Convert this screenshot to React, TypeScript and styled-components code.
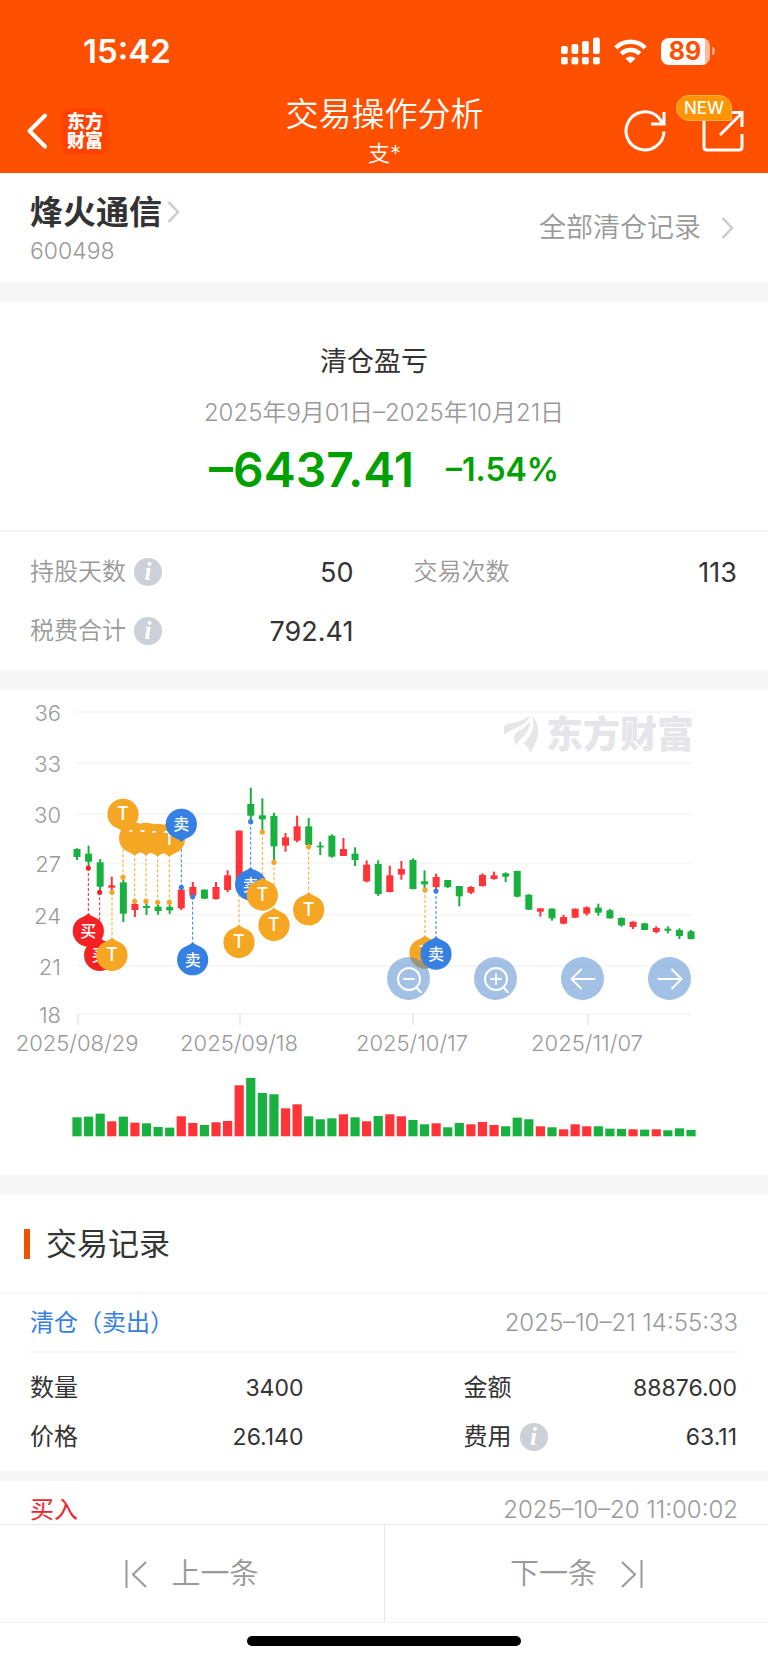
import React from "react";
import styled, { createGlobalStyle } from "styled-components";

const SANS = 'Inter, "Noto Sans CJK SC", sans-serif';

const GlobalStyle = createGlobalStyle`
  *, *::before, *::after { box-sizing: border-box; }
  body {
    margin: 0;
    background: #fff;
    color: #333;
    font-family: ${SANS};
    font-size: 23px;
    line-height: 1;
  }
  button {
    margin: 0;
    padding: 0;
    border: 0;
    background: none;
    color: inherit;
    font: inherit;
    cursor: pointer;
  }
  a { color: inherit; text-decoration: none; }
  h1, h2, p, dl, dt, dd { margin: 0; font-weight: inherit; font-size: inherit; }
  svg { display: block; }
`;

const Screen = styled.div`
  display: flex;
  flex-direction: column;
  height: 100vh;
`;

/* ---------- header ---------- */

const Header = styled.header`
  flex: none;
  background: #ff5000;
  color: #fff;
`;

const StatusBar = styled.div`
  display: flex;
  align-items: center;
  justify-content: space-between;
  height: 88px;
  padding: 14px 53px 0 83px;
`;

const Clock = styled.time`
  font-size: 33px;
  font-weight: 600;
`;

const StatusIcons = styled.div`
  display: flex;
  align-items: center;
  gap: 14px;
`;

const Battery = styled.div`
  display: flex;
  align-items: center;
  gap: 2px;
`;

const BatteryBody = styled.span`
  width: 49px;
  height: 27px;
  padding-right: 1px;
  border-radius: 8px;
  background: linear-gradient(90deg, #fff 44px, #ffb999 44px);
  color: #ff5000;
  font-size: 25px;
  font-weight: 700;
  line-height: 27px;
  text-align: center;
`;

const BatteryNub = styled.span`
  width: 3px;
  height: 8px;
  border-radius: 0 3px 3px 0;
  background: #ffa680;
`;

const NavBar = styled.div`
  display: grid;
  grid-template-columns: 1fr auto 1fr;
  align-items: center;
  height: 85px;
  padding: 0 24px 0 25px;
`;

const NavGroup = styled.div<{ $end?: boolean }>`
  display: flex;
  align-items: center;
  justify-content: ${(p) => (p.$end ? "flex-end" : "flex-start")};
  gap: ${(p) => (p.$end ? "36px" : "15px")};
`;

const AppMark = styled.a`
  display: flex;
  flex-direction: column;
  align-items: center;
  justify-content: center;
  width: 46px;
  height: 46px;
  border-radius: 9px;
  background: #ff4200;
  font-size: 18px;
  font-weight: 900;
  line-height: 19px;
`;

const NavTitle = styled.div`
  display: flex;
  flex-direction: column;
  align-items: center;
  gap: 5px;
`;

const PageTitle = styled.h1`
  font-size: 33px;
  font-weight: 350;
  line-height: 40px;
`;

const PageSubtitle = styled.p`
  font-size: 22px;
  font-weight: 350;
  line-height: 28px;
`;

const ShareButton = styled.button`
  position: relative;
`;

const NewBadge = styled.span`
  position: absolute;
  left: -26px;
  top: -15px;
  width: 56px;
  height: 26px;
  border: 1px solid #ffb04d;
  border-radius: 13px 13px 2px 13px;
  background: #ff9500;
  font-size: 17px;
  font-weight: 500;
  line-height: 25px;
  text-align: center;
`;

/* ---------- body ---------- */

const Content = styled.main`
  flex: 1;
  min-height: 0;
  overflow-y: auto;
  scrollbar-width: none;
`;

const Gap = styled.div<{ $thin?: boolean }>`
  height: ${(p) => (p.$thin ? "10px" : "20px")};
  background: #f7f7f7;
`;

const StockBar = styled.section`
  display: flex;
  align-items: center;
  justify-content: space-between;
  height: 109px;
  padding: 0 34px 0 30px;
`;

const Stock = styled.a`
  display: flex;
  flex-direction: column;
  gap: 8px;
  color: #999;
  font-weight: 350;
`;

const StockName = styled.span`
  display: flex;
  align-items: center;
  gap: 5px;
  color: #333;
  font-size: 33px;
  font-weight: 700;
  line-height: 40px;
`;

const AllRecords = styled.a`
  display: flex;
  align-items: center;
  gap: 20px;
  color: #999;
  font-size: 27px;
  font-weight: 350;
`;

const Profit = styled.section`
  display: flex;
  flex-direction: column;
  align-items: center;
  height: 230px;
  padding-top: 44px;
  border-bottom: 2px solid #f5f5f5;
`;

const ProfitTitle = styled.h2`
  padding-right: 20px;
  font-size: 27px;
  line-height: 32px;
`;

const Period = styled.p`
  margin-top: 20px;
  color: #999;
  font-size: 24px;
  font-weight: 350;
  line-height: 30px;
`;

const Amounts = styled.p`
  display: flex;
  align-items: center;
  gap: 32px;
  margin-top: 12px;
  color: #00a000;
  line-height: 60px;
`;

const Amount = styled.strong`
  font-size: 48px;
  font-weight: 600;
`;

const Percent = styled.span`
  font-size: 32px;
  font-weight: 600;
`;

const Stats = styled.dl`
  display: grid;
  grid-template-columns: 1fr 1fr;
  column-gap: 60px;
  row-gap: 19px;
  padding: 20px 31px 19px 30px;
`;

const Details = styled(Stats)`
  column-gap: 160px;
  row-gap: 9px;
  padding: 15px 31px 14px 30px;
`;

const Pair = styled.div<{ $dark?: boolean }>`
  display: flex;
  align-items: center;
  justify-content: space-between;
  height: 40px;

  dt {
    display: flex;
    align-items: center;
    gap: 8px;
    color: ${(p) => (p.$dark ? "#333" : "#999")};
    font-size: 24px;
    font-weight: ${(p) => (p.$dark ? 400 : 350)};
  }
  dd { font-size: ${(p) => (p.$dark ? "23px" : "27px")}; }
`;

const InfoButton = styled.button`
  width: 28px;
  height: 28px;
  border-radius: 50%;
  background: #ccd0d7;
  color: #fff;
  font: italic 700 25px/26px "Liberation Serif", serif;
  text-align: center;
`;

/* ---------- chart ---------- */

const ChartPanel = styled.section`
  position: relative;
  svg text { font-family: ${SANS}; }
`;

const ChartSvg = styled.svg`
  width: 100%;
  height: auto;
`;

const ChartControls = styled.div`
  position: absolute;
  right: 10%;
  bottom: 36%;
  display: flex;
  gap: 44px;
`;

const RoundButton = styled.button`
  display: flex;
  align-items: center;
  justify-content: center;
  width: 43px;
  height: 43px;
  border-radius: 50%;
  background: rgba(71, 131, 201, 0.5);
`;

/* ---------- records ---------- */

const RecordsTitle = styled.h2`
  display: flex;
  align-items: center;
  gap: 16px;
  height: 99px;
  padding-left: 24px;
  border-bottom: 2px solid #f7f7f7;
  font-size: 31px;

  &::before {
    content: "";
    width: 6px;
    height: 30px;
    background: #ea5504;
  }
`;

const RecordHead = styled.div`
  display: flex;
  align-items: center;
  justify-content: space-between;
  height: 59px;
  margin: 0 30px;
  border-bottom: 2px solid #f7f7f7;
`;

const Action = styled.span<{ $buy?: boolean }>`
  color: ${(p) => (p.$buy ? "#f5222d" : "#3580e2")};
  font-size: 24px;
`;

const Stamp = styled.time`
  color: #999;
  font-size: 24px;
  font-weight: 350;
`;

/* ---------- footer ---------- */

const Footer = styled.footer`
  flex: none;
  background: #fff;
`;

const Pager = styled.nav`
  display: grid;
  grid-template-columns: 1fr 1fr;
  height: 99px;
  border-top: 1px solid #e6e6e6;
  border-bottom: 1px solid #f2f2f2;
`;

const PagerButton = styled.button`
  display: flex;
  align-items: center;
  justify-content: center;
  gap: 24px;
  color: #999;
  font-size: 29px;
  font-weight: 350;

  & + & { border-left: 1px solid #e6e6e6; }
`;

const HomeArea = styled.div`
  display: flex;
  justify-content: center;
  height: 40px;
  padding-top: 13px;
`;

const HomeBar = styled.span`
  width: 274px;
  height: 10px;
  border-radius: 5px;
  background: #000;
`;

/* ---------- chart data ---------- */

// Vertical values are in thirds of a chart unit, measured from the top.
const u = (n: number) => n / 3;
const cx = (i: number) => 77 + i * 11.585;

const RED = "#ff3338";
const GREEN = "#18b03f";

// [direction, high, body top, body bottom, low, volume]
type Candle = [string, number, number, number, number, number];
const CANDLES: Candle[] = [
  ["g", 475, 477, 501, 510, 57], ["g", 467, 491, 515, 528, 59], ["g", 507, 517, 590, 600, 68],
  ["r", 560, 586, 593, 600, 45], ["g", 568, 577, 671, 696, 59], ["r", 636, 642, 660, 681, 41],
  ["g", 640, 648, 654, 675, 39], ["g", 643, 650, 663, 674, 28], ["g", 645, 651, 661, 672, 26],
  ["r", 597, 599, 655, 660, 60], ["r", 576, 591, 617, 622, 40], ["g", 598, 599, 626, 627, 34],
  ["r", 576, 591, 627, 629, 42], ["r", 541, 556, 600, 607, 46], ["r", 422, 422, 575, 575, 153],
  ["g", 293, 342, 377, 390, 175], ["g", 325, 376, 388, 420, 130], ["g", 368, 378, 469, 512, 126],
  ["r", 429, 442, 467, 485, 84], ["r", 377, 409, 452, 457, 96], ["g", 384, 409, 465, 468, 60],
  ["g", 455, 467, 472, 495, 51], ["g", 433, 437, 500, 503, 54], ["r", 444, 477, 498, 498, 66],
  ["g", 472, 491, 510, 528, 57], ["r", 511, 524, 574, 577, 45], ["g", 511, 522, 612, 618, 61],
  ["r", 527, 556, 606, 607, 66], ["r", 513, 537, 554, 569, 60], ["g", 505, 510, 597, 598, 49],
  ["g", 541, 574, 583, 594, 36], ["r", 551, 561, 591, 598, 39], ["g", 570, 570, 591, 594, 27],
  ["g", 588, 588, 619, 649, 40], ["r", 588, 591, 608, 612, 36], ["r", 550, 555, 588, 590, 43],
  ["r", 545, 556, 567, 569, 34], ["g", 547, 550, 560, 576, 30], ["g", 542, 543, 620, 622, 56],
  ["g", 613, 614, 659, 660, 51], ["r", 655, 655, 665, 680, 30], ["g", 655, 656, 685, 692, 27],
  ["r", 675, 681, 701, 703, 21], ["r", 656, 656, 683, 684, 36], ["r", 649, 652, 671, 677, 30],
  ["g", 641, 653, 668, 677, 30], ["g", 657, 661, 685, 686, 23], ["g", 682, 684, 706, 710, 22],
  ["r", 694, 695, 711, 717, 21], ["g", 699, 700, 720, 720, 20], ["r", 709, 714, 726, 730, 21],
  ["g", 709, 716, 722, 730, 18], ["g", 715, 720, 738, 747, 24], ["g", 720, 724, 747, 748, 19],
];

const PRICE_LINES: [string, number][] = [
  ["36", 66], ["33", 218], ["30", 372], ["27", 520], ["24", 674], ["21", 827], ["18", 973],
];

const DATE_TICKS: [string, number][] = [
  ["2025/08/29", 77], ["2025/09/18", 239], ["2025/10/17", 412], ["2025/11/07", 587],
];

const PIN_COLORS: Record<string, string> = { T: "#f5a623", 卖: "#3580e2", 买: "#f52225" };

// [label, candle x, marked price, true when the pin stands above the price]
type PinData = [string, number, number, boolean?];
const PINS: PinData[] = [
  ["买", 265, 534], ["买", 299, 607], ["T", 336, 607], ["T", 369, 562, true],
  ["T", 404, 634, true], ["T", 438, 634, true], ["T", 473, 637, true], ["T", 508, 637, true],
  ["卖", 544, 592, true], ["卖", 578, 620], ["T", 717, 568], ["卖", 752, 395], ["T", 787, 426],
  ["T", 822, 517], ["T", 926, 470], ["T", 1275, 600], ["卖", 1308, 603],
];

const Pin = ({ data: [label, px, price, above] }: { data: PinData }) => {
  const x = u(px);
  const dir = above ? -1 : 1;
  const tip = u(price) + dir * 45.5;
  const c = tip + dir * 17.5;
  return (
    <g>
      <path
        d="M0-17.5C3-14.5 8-13.5 11.5-10.5A15.6 15.6 0 1 1-11.5-10.5C-8-13.5-3-14.5 0-17.5Z"
        transform={`translate(${x} ${c}) scale(1 ${dir})`}
        fill={PIN_COLORS[label]}
      />
      <text x={x} y={c + 6} fontSize={label === "T" ? 18 : 16} fontWeight={500} fill="#fff" textAnchor="middle">
        {label}
      </text>
    </g>
  );
};

const PinStem = ({ data: [label, px, price, above] }: { data: PinData }) => (
  <g stroke={PIN_COLORS[label]} fill={PIN_COLORS[label]}>
    <line
      x1={u(px)} x2={u(px)} y1={u(price)} y2={u(price) + (above ? -46 : 46)}
      strokeWidth="1" strokeDasharray="3 2"
    />
    <circle cx={u(px)} cy={u(price)} r="2.6" stroke="none" />
  </g>
);

const Chart = () => (
  <ChartSvg viewBox="0 0 768 485" role="img" aria-label="烽火通信 K线图">
    {PRICE_LINES.map(([label, y]) => (
      <g key={label}>
        <line x1="77" x2="691" y1={u(y)} y2={u(y)} stroke="#f6f6f7" strokeWidth="2" />
        <text x="61" y={u(y) + 9} fontSize="22" fontWeight="350" fill="#999" textAnchor="end">{label}</text>
      </g>
    ))}
    {DATE_TICKS.map(([label, x]) => (
      <g key={label}>
        <line x1={x + 1} x2={x + 1} y1="324" y2="335" stroke="#ededed" strokeWidth="2" />
        <text x={x} y="361" fontSize="22" fontWeight="350" fill="#999" textAnchor="middle">{label}</text>
      </g>
    ))}
    <g fill="#e6e5ea">
      <path d="M504 40C504 35 506 34 512 33C521 31 526 29 529 26C528 35 515 37 504 44.5Z" />
      <path d="M530 25C531 32 527 37 517 42C514 44 515 51 516 55C518 46 530 41 530 25Z" />
      <path d="M504 36C512 33 522 33 529 26C526 36 511 36 504 45Z" />
      <path d="M530 25C533 38 519 39 513.5 47L516 55.5C520 47 533 43 530 25Z" />
      <path d="M532 26C540 34 541 46 530.5 62.5C529 58 526 56 523.5 53C531 46 536 37 532 26Z" />
      <text x="546" y="58" fontSize="37" fontWeight="900">东方财富</text>
    </g>
    {CANDLES.map(([dir, high, top, bottom, low, vol], i) => (
      <g key={i} fill={dir === "r" ? RED : GREEN}>
        <rect x={cx(i) - 1} y={u(high)} width="2" height={u(low - high)} />
        <rect x={cx(i) - 3.5} y={u(top)} width="7" height={u(bottom - top)} />
        <rect x={cx(i) - 4.6} y={446.3 - u(vol)} width="9.2" height={u(vol)} />
      </g>
    ))}
    {PINS.map((p, i) => <PinStem key={i} data={p} />)}
    {PINS.map((p, i) => <Pin key={i} data={p} />)}
  </ChartSvg>
);

/* ---------- icons ---------- */

const Chevron = () => (
  <svg width="13" height="22" viewBox="0 0 13 22" fill="none" stroke="#ccc" strokeWidth="2.5">
    <path d="M1.5 1L11 11L1.5 21" />
  </svg>
);

const ControlIcon = ({ children }: { children: React.ReactNode }) => (
  <svg width="28" height="28" viewBox="0 0 28 28" fill="none" stroke="#fff" strokeWidth="2" strokeLinecap="round" strokeLinejoin="round">
    {children}
  </svg>
);

const Lens = () => <><circle cx="14" cy="14" r="11" /><path d="M21.5 22.5L26 27.5M9 14H19" /></>;

const SignalIcon = () => (
  <svg width="39" height="28" viewBox="0 0 39 28" fill="#fff">
    {[[0, 9], [10.5, 7], [21, 4], [32, 0.5]].map(([x, y]) => (
      <React.Fragment key={x}>
        <rect x={x} y={y} width="6.8" height={17 - y} rx="2" />
        <rect x={x} y="20" width="6.8" height="7.5" rx="2" />
      </React.Fragment>
    ))}
  </svg>
);

const WifiIcon = () => (
  <svg width="33" height="25" viewBox="0 0 33 25" fill="none" stroke="#fff" strokeWidth="4.5">
    <path d="M1.8 8.8A21 21 0 0 1 31.2 8.8" />
    <path d="M7.3 14.8A13 13 0 0 1 25.7 14.8" />
    <path d="M16.5 24.5L11.5 19.5A7.2 7.2 0 0 1 21.5 19.5Z" fill="#fff" stroke="none" />
  </svg>
);

const EdgeArrow = ({ next }: { next?: boolean }) => (
  <svg width="22" height="28" viewBox="0 0 22 28" fill="none" stroke="#999" strokeWidth="2">
    <path d={next ? "M1 2L14 14.5L1 27M20.5 0V28" : "M1.5 0V28M21 2L8 14.5L21 27"} />
  </svg>
);

const Info = ({ label }: { label: string }) => <InfoButton aria-label={`${label}说明`}>i</InfoButton>;

interface StatProps { label: string; value: string; info?: boolean; dark?: boolean }
const Stat = ({ label, value, info, dark }: StatProps) => (
  <Pair $dark={dark}>
    <dt>{label}{info && <Info label={label} />}</dt>
    <dd>{value}</dd>
  </Pair>
);

export default function App() {
  return (
    <Screen>
      <GlobalStyle />
      <Header>
        <StatusBar>
          <Clock>15:42</Clock>
          <StatusIcons>
            <SignalIcon />
            <WifiIcon />
            <Battery>
              <BatteryBody>89</BatteryBody>
              <BatteryNub />
            </Battery>
          </StatusIcons>
        </StatusBar>
        <NavBar>
          <NavGroup>
            <button aria-label="返回">
              <svg width="22" height="36" viewBox="0 0 22 36" fill="none" stroke="#fff" strokeWidth="4" strokeLinecap="round" strokeLinejoin="round">
                <path d="M20 2.500L4.500 18L20 33.500" />
              </svg>
            </button>
            <AppMark href="#"><span>东方</span><span>财富</span></AppMark>
          </NavGroup>
          <NavTitle>
            <PageTitle>交易操作分析</PageTitle>
            <PageSubtitle>支*</PageSubtitle>
          </NavTitle>
          <NavGroup $end>
            <button aria-label="刷新">
              <svg width="42" height="42" viewBox="0 0 42 42" fill="none" stroke="#fff" strokeWidth="3">
                <path d="M40 21.5A19 19 0 1 1 34.5 7.5L39 13.5M40 2V14H27" />
              </svg>
            </button>
            <ShareButton aria-label="分享">
              <svg width="42" height="42" viewBox="0 0 42 42" fill="none" stroke="#fff" strokeWidth="3">
                <path d="M2 8V37Q2 40 5 40H37Q40 40 40 37V24M26 2.500H40V17M40 3L18 25" />
              </svg>
              <NewBadge>NEW</NewBadge>
            </ShareButton>
          </NavGroup>
        </NavBar>
      </Header>

      <Content>
        <StockBar>
          <Stock href="#">
            <StockName>烽火通信<Chevron /></StockName>
            <span>600498</span>
          </Stock>
          <AllRecords href="#">全部清仓记录<Chevron /></AllRecords>
        </StockBar>
        <Gap />

        <Profit>
          <ProfitTitle>清仓盈亏</ProfitTitle>
          <Period>2025年9月01日–2025年10月21日</Period>
          <Amounts>
            <Amount>–6437.41</Amount>
            <Percent>–1.54%</Percent>
          </Amounts>
        </Profit>
        <Stats>
          <Stat label="持股天数" value="50" info />
          <Stat label="交易次数" value="113" />
          <Stat label="税费合计" value="792.41" info />
        </Stats>
        <Gap />

        <ChartPanel>
          <Chart />
          <ChartControls>
            <RoundButton aria-label="缩小"><ControlIcon><Lens /></ControlIcon></RoundButton>
            <RoundButton aria-label="放大"><ControlIcon><Lens /><path d="M14 9V19" /></ControlIcon></RoundButton>
            <RoundButton aria-label="左移"><ControlIcon><path d="M25.5 14H3M12 4.5L2.5 14L12 23.5" /></ControlIcon></RoundButton>
            <RoundButton aria-label="右移"><ControlIcon><path d="M2.5 14H25M16 4.5L25.5 14L16 23.5" /></ControlIcon></RoundButton>
          </ChartControls>
        </ChartPanel>
        <Gap />

        <section>
          <RecordsTitle>交易记录</RecordsTitle>
          <article>
            <RecordHead>
              <Action>清仓（卖出）</Action>
              <Stamp>2025–10–21 14:55:33</Stamp>
            </RecordHead>
            <Details>
              <Stat dark label="数量" value="3400" />
              <Stat dark label="金额" value="88876.00" />
              <Stat dark label="价格" value="26.140" />
              <Stat dark label="费用" value="63.11" info />
            </Details>
          </article>
          <Gap $thin />
          <article>
            <RecordHead>
              <Action $buy>买入</Action>
              <Stamp>2025–10–20 11:00:02</Stamp>
            </RecordHead>
          </article>
        </section>
      </Content>

      <Footer>
        <Pager>
          <PagerButton><EdgeArrow />上一条</PagerButton>
          <PagerButton>下一条<EdgeArrow next /></PagerButton>
        </Pager>
        <HomeArea><HomeBar /></HomeArea>
      </Footer>
    </Screen>
  );
}
